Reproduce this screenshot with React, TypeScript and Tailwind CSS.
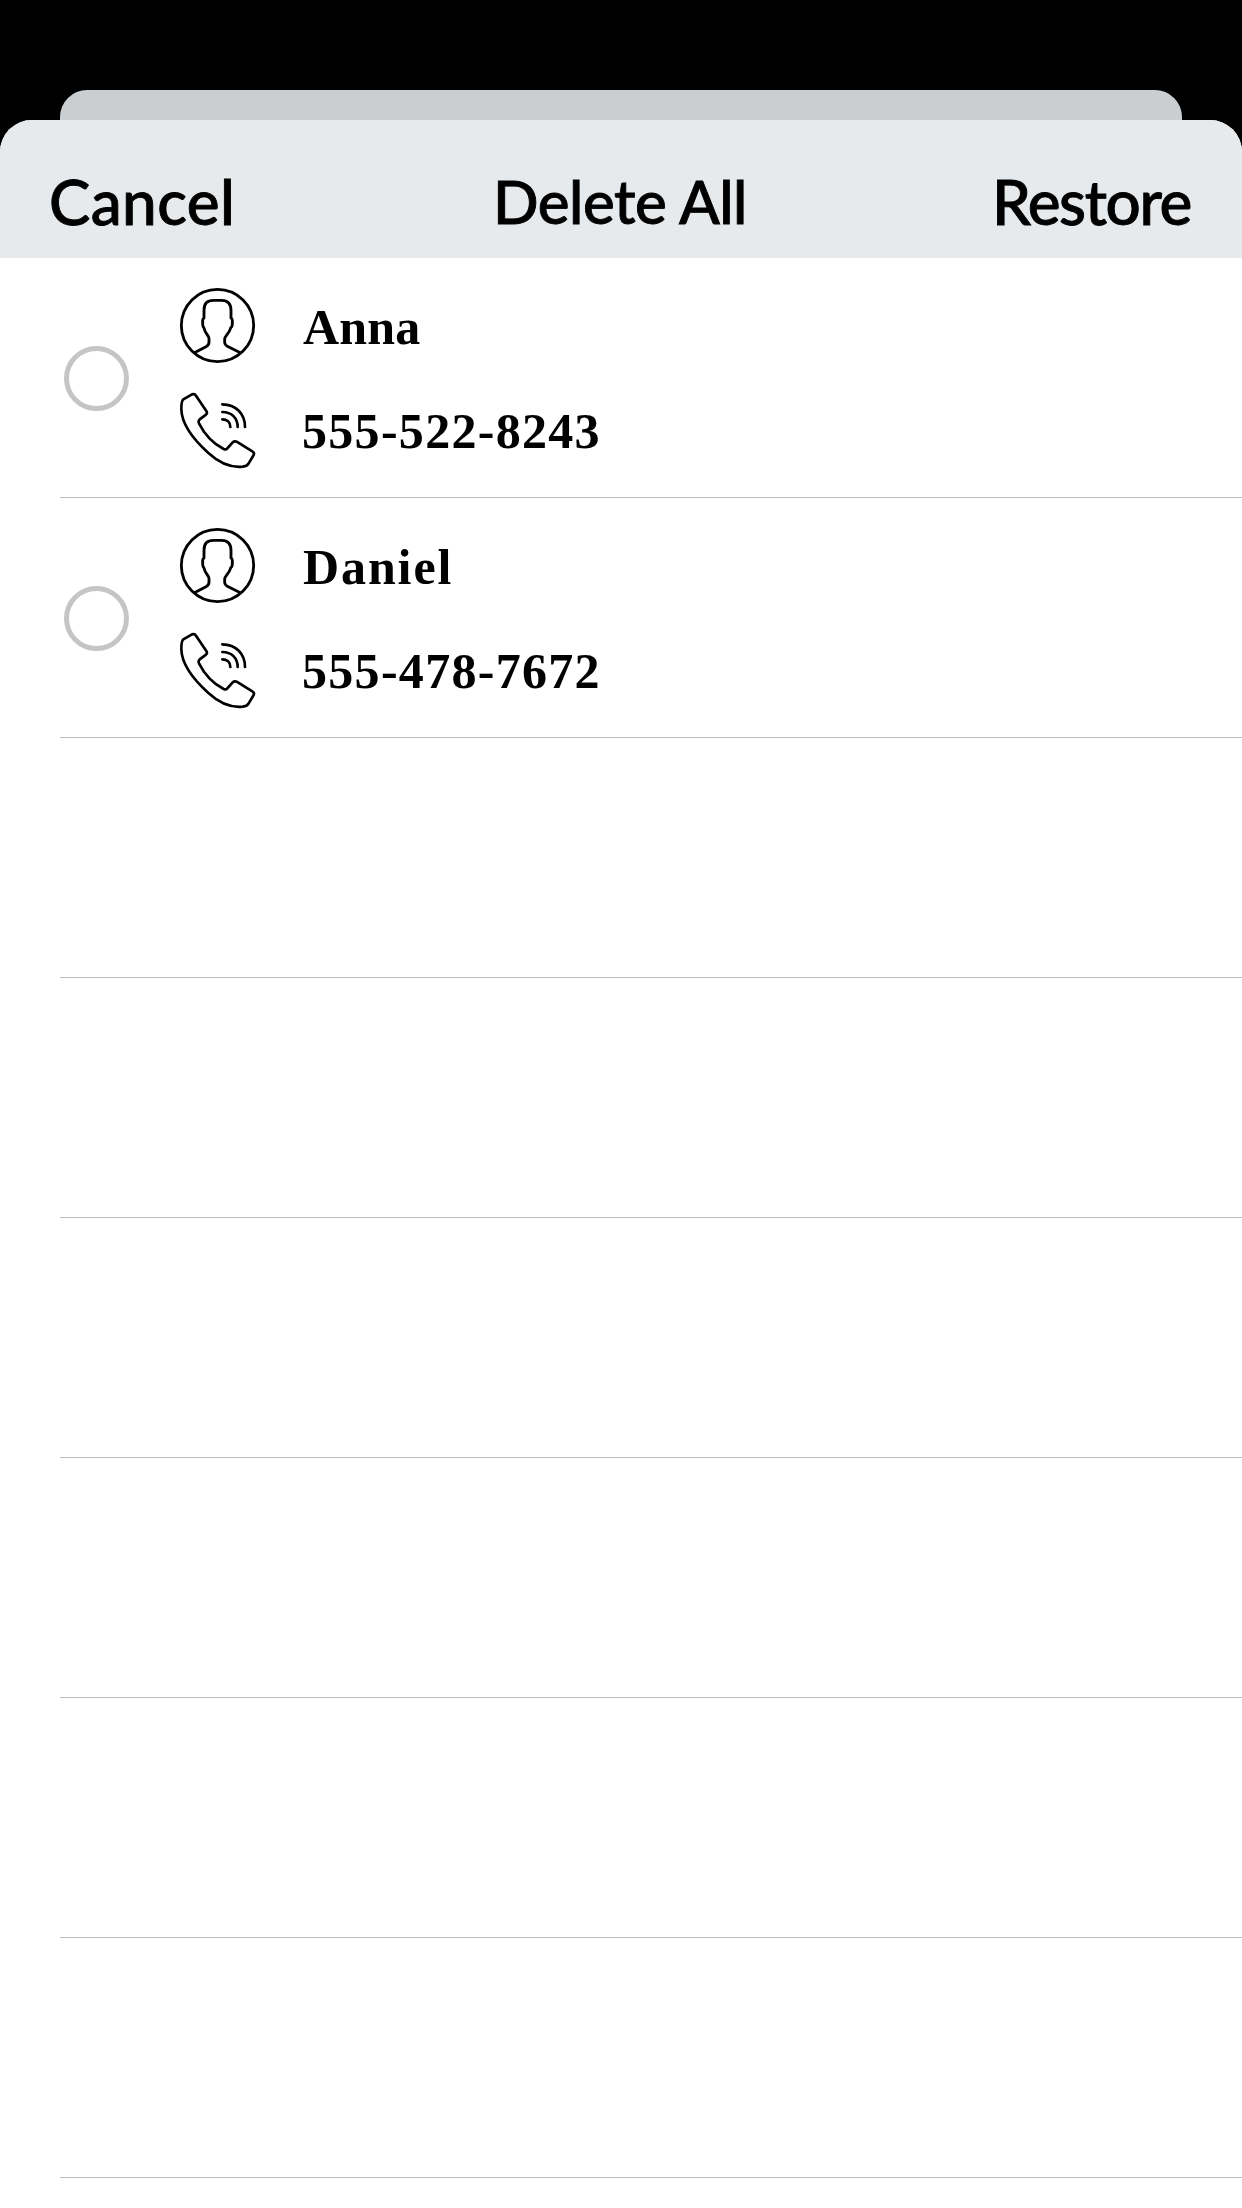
interface Contact {
  name: string;
  phone: string;
  nameSpacing: string;
}

const contacts: Contact[] = [
  { name: "Anna", phone: "555-522-8243", nameSpacing: "tracking-[0.2px]" },
  { name: "Daniel", phone: "555-478-7672", nameSpacing: "tracking-[1.9px]" },
];

const EMPTY_ROWS = 6;

const PersonIcon = () => (
  <svg viewBox="0 0 285 285" className="size-[95px] shrink-0" fill="none" stroke="#000" strokeWidth="8.5" strokeLinejoin="round">
    <circle cx="142.5" cy="136.5" r="108.5" />
    <path d="M73 218 L108 200 Q117 195 117 187 V175 C117 168 105 160 102 144 Q98 141 98 132 V121 Q98 116 102 114 V90 C102 70 112 61 130 61 H155 C174 61 183 72 183 92 V114 Q187 116 187 121 V132 Q187 141 182 144 C178 160 164 168 164 177 V187 Q164 194 172 199 L211 218" />
  </svg>
);

const PhoneIcon = () => (
  <svg viewBox="0 0 285 285" className="size-[95px] shrink-0" fill="none" stroke="#000" strokeWidth="8" strokeLinecap="round" strokeLinejoin="round">
    <path d="M40 52 L66 37 Q74 34 78 41 L109 87 Q113 93 108 98 L89 112 Q84 117 87 124 C104 158 132 186 161 201 Q168 204 172 199 L188 181 Q193 176 200 179 L247 208 Q254 212 251 219 L236 244 Q232 252 218 254 C178 258 142 238 116 214 C75 177 35 130 34 82 Q34 57 40 52 Z" />
    <path d="M157 112 C172 112 181 121 181 135" />
    <path d="M157 90 C185 90 203 108 203 135" />
    <path d="M157 67 C198 67 225 96 225 135" />
  </svg>
);

const ContactRow = ({ name, phone, nameSpacing }: Contact) => (
  <li className="flex h-60 items-start border-b border-[#bcbcbe]">
    <span className="mt-[88px] ml-1 size-[65px] shrink-0 rounded-full border-5 border-[#c5c5c5]" />
    <div className="mt-[22px] ml-[41px] flex flex-col gap-[7px] text-[50px] leading-none font-bold text-black">
      <div className="flex items-center gap-[38px]">
        <PersonIcon />
        <span className={`pb-0.5 ${nameSpacing}`}>{name}</span>
      </div>
      <div className="flex items-center gap-[37px]">
        <PhoneIcon />
        <span className="pt-0.5 tracking-[1.3px]">{phone}</span>
      </div>
    </div>
  </li>
);

const App: React.FC = function () {
  return (
    <div className="flex h-[2208px] w-[1242px] flex-col overflow-hidden bg-black pt-[90px]">
      {/* Card behind the sheet */}
      <div className="mx-[60px] h-[30px] shrink-0 rounded-t-[27px] bg-[#cbced1]" />

      {/* Sheet */}
      <div className="flex flex-1 flex-col overflow-hidden rounded-t-[32px] bg-white">
        <header className="grid h-[138px] shrink-0 grid-cols-3 items-center bg-[#e7eaed] pr-[51px] pl-[49px] pt-[24px] font-['Lato',sans-serif] text-[62px] leading-none font-medium text-black [-webkit-text-stroke:0.9px_#000]">
          <button className="justify-self-start whitespace-nowrap tracking-[0.4px]">Cancel</button>
          <button className="justify-self-center whitespace-nowrap text-[60px] tracking-[-0.5px]">Delete All</button>
          <button className="justify-self-end whitespace-nowrap tracking-[-1.4px]">Restore</button>
        </header>

        <ul className="ml-[60px] font-['Liberation_Serif',serif]">
          {contacts.map((contact) => (
            <ContactRow key={contact.phone} {...contact} />
          ))}
          {Array.from({ length: EMPTY_ROWS }, (_, index) => (
            <li key={index} className="h-60 border-b border-[#bcbcbe]" />
          ))}
        </ul>
      </div>
    </div>
  );
};

export default App;
